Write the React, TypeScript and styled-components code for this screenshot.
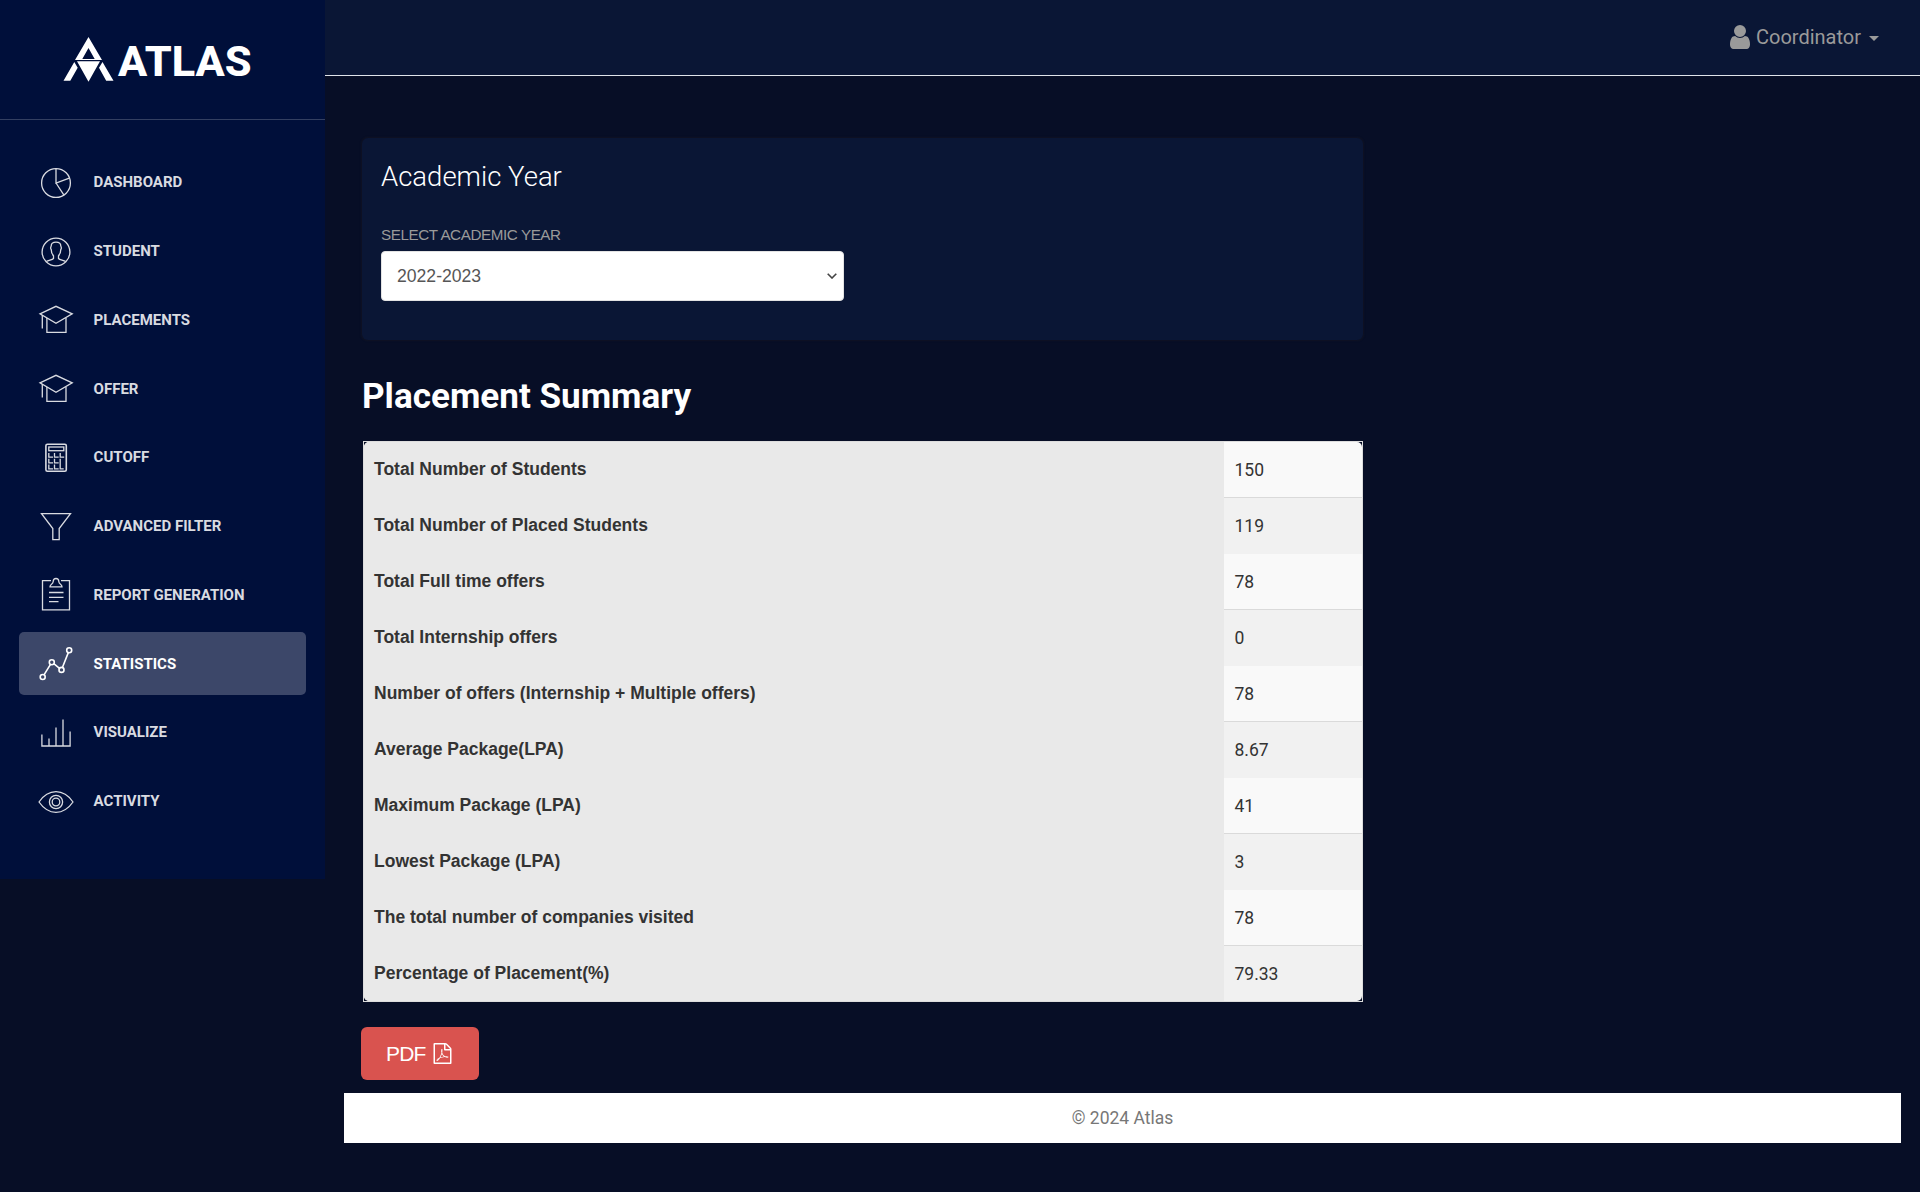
import React from "react";
import styled, { createGlobalStyle } from "styled-components";

const GlobalStyle = createGlobalStyle`
  * { box-sizing: border-box; }
  html, body { margin: 0; background: #070e26; }
  body { font-family: Roboto, "Liberation Sans", sans-serif; color: #333; }
`;

const Page = styled.div`
  display: flex;
  align-items: flex-start;
  height: 1192px;
  overflow: hidden;
`;

const Sidebar = styled.aside`
  width: 325px;
  height: 878.5px;
  flex: none;
  background: #000f3a;
`;

const Brand = styled.div`
  height: 120px;
  padding: 32px 0 0 58px;
  border-bottom: 1px solid #333f61;
  svg { display: block; }
`;

const Nav = styled.nav`
  display: flex;
  flex-direction: column;
  gap: 6px;
  padding: 30.875px 19px 0;
`;

const NavItem = styled.a<{ $active?: boolean }>`
  display: flex;
  align-items: center;
  gap: 19.6px;
  height: 62.75px;
  padding-left: 19px;
  border-radius: 5px;
  background: ${(p) => (p.$active ? "#3c4769" : "transparent")};
  color: ${(p) => (p.$active ? "#fff" : "#d9dbe1")};
  font-size: 15px;
  font-weight: 700;
  line-height: 20px;
  text-transform: uppercase;
  svg {
    flex: none;
    margin-top: 1px;
    fill: none;
    stroke: currentColor;
    stroke-width: 1.3;
  }
`;

const Main = styled.div`
  flex: 1;
  min-width: 0;
`;

const Header = styled.header`
  display: flex;
  justify-content: flex-end;
  align-items: center;
  height: 76px;
  padding: 0 41px 2px 0;
  background: #0a1635;
  border-bottom: 1px solid #dfe3ea;
`;

const UserMenu = styled.div`
  display: flex;
  align-items: center;
  color: #9a9a9a;
  font-size: 20px;
  line-height: 28px;
  svg { margin-right: 6px; }
`;

const Caret = styled.span`
  margin-left: 8px;
  margin-top: 3px;
  border: 5px solid transparent;
  border-top-color: currentColor;
  border-bottom: 0;
`;

const Content = styled.main`
  padding: 62px 0 0 37px;
  width: 1038px;
`;

const Card = styled.section`
  height: 202px;
  padding: 20px 19px 0;
  border-radius: 6px;
  background: #0a1635;
  box-shadow: 0 0 2px 1px rgba(35, 30, 30, 0.3);
`;

const CardTitle = styled.h4`
  margin: 0;
  color: #fff;
  font-size: 27.5px;
  font-weight: 300;
  line-height: 38px;
`;

const Label = styled.label`
  display: block;
  margin-top: 29px;
  color: #9a9a9a;
  font: 15.2px/20px "Liberation Sans", Arial, sans-serif;
  letter-spacing: -0.4px;
  text-transform: uppercase;
`;

const Select = styled.div`
  display: flex;
  align-items: center;
  justify-content: space-between;
  width: 463px;
  height: 50px;
  margin-top: 6px;
  padding: 0 6px 1px 15px;
  border: 1px solid #e3e3e3;
  border-radius: 4px;
  background: #fff;
  color: #565656;
  font: 17.6px/24px "Liberation Sans", Arial, sans-serif;
`;

const SectionTitle = styled.h2`
  margin: 33px 0 0;
  color: #fff;
  font-size: 35.1px;
  font-weight: 700;
  line-height: 46px;
`;

const Summary = styled.div`
  width: 1000px;
  height: 561px;
  margin: 22px 0 0 1px;
  border: 1px solid #ddd;
`;

const Rows = styled.div`
  height: 559px;
  border-radius: 5px;
  overflow: hidden;
`;

const Row = styled.div<{ $odd: boolean }>`
  display: grid;
  grid-template-columns: 860px 1fr;
  height: 56px;
  background: ${(p) => (p.$odd ? "#f9f9f9" : "#f1f1f1")};
`;

const RowLabel = styled.div`
  padding: 15px 0 0 10px;
  background: #e9e9e9;
  font: 700 17.5px/24px "Liberation Sans", Arial, sans-serif;
  color: #333;
`;

const RowValue = styled.div<{ $odd: boolean }>`
  padding: 15px 0 0 10.5px;
  border-bottom: ${(p) => (p.$odd ? "1px solid #dadada" : "0")};
  font-size: 17.5px;
  line-height: 27px;
`;

const PdfButton = styled.button`
  display: flex;
  align-items: center;
  gap: 6px;
  width: 118px;
  height: 53px;
  margin: 25px 0 0 -1px;
  padding: 0 0 0 25px;
  border: 0;
  border-radius: 6px;
  background: #d9534f;
  color: #fff;
  font: 21px/28px "Liberation Sans", Arial, sans-serif;
  letter-spacing: -0.8px;
`;

const Footer = styled.footer`
  height: 50px;
  margin: 13px 19px 0;
  background: #fff;
  color: #777;
  font-size: 17.5px;
  line-height: 50px;
  text-align: center;
`;

const Cap = () => (
  <>
    <path d="M2 11.900 18 4.300l16.200 7.600L18 21.200z" />
    <path d="M8.900 16v14.400H28V16M4.300 13v13.400" />
  </>
);

const icons: Record<string, React.ReactNode> = {
  Dashboard: (
    <>
      <circle cx="18" cy="18" r="14.4" />
      <path d="M18 3.6V18l13.3-4.8M18 18l7.8 11.8" />
    </>
  ),
  Student: (
    <>
      <circle cx="18" cy="18" r="13.9" />
      <path d="M8.3 27.5c2.2-1.5 5.8-1.5 7.2-3V21.700c-2-2-2.300-3.600-2.300-6.200-1-1.300-.5-2.500 0-3.500 0-2.600 1.800-3.900 4.800-3.900s4.800 1.300 4.800 3.900c.5 1 1 2.200 0 3.500 0 2.600-.3 4.200-2.300 6.200v2.800c1.400 1.500 5 1.500 7.200 3" />
    </>
  ),
  Placements: <Cap />,
  Offer: <Cap />,
  Cutoff: (
    <>
      <rect x="7.900" y="4.300" width="20.400" height="27" rx="1.500" strokeWidth="1.600" />
      <rect x="10.800" y="7" width="15" height="3.700" />
      <path d="M10.800 13v4.200h4.200M16.500 13v4.200h4.200M22.200 13v4.200h4M10.800 18.700v4.200h4.200M16.500 18.700v4.200h4.200M10.800 24.500v4.300h4.200M16.500 24.500v4.300h4.200M22.200 18.700v10.100h3.500" />
    </>
  ),
  "Advanced Filter": <path d="M3.500 4.700h29L21.200 19.500v11.200h-6.400V19.500z" />,
  "Report Generation": (
    <>
      <path d="M13 3.700H4.500v29.200h27V3.700H23" />
      <path d="M12 9.800c0-3 3-2 3.200-5.300.1-4 5.500-4 5.600 0C21 7.800 24 6.800 24 9.800zM11 15.500h14.500M11 20.300h14.500M11 24.700h9.500" />
    </>
  ),
  Statistics: (
    <g strokeWidth="1.600">
      <circle cx="4.700" cy="31" r="2.500" />
      <circle cx="13.800" cy="16.200" r="2.500" />
      <circle cx="23.500" cy="23.900" r="2.500" />
      <circle cx="31.200" cy="4.200" r="2.500" />
      <path d="M6 28.800l6.500-10.400M15.800 17.700l5.700 4.600M24.400 21.500l5.900-14.900" />
    </g>
  ),
  Visualize: <path d="M3.900 19.600v11.400h28.200V16.600M11 31v-7.500M18 31V12.600M25 31V4.600" />,
  Activity: (
    <>
      <path d="M1 18C5.500 11.500 11 7.700 18 7.700S30.500 11.500 35 18C30.500 24.500 25 28.300 18 28.300S5.500 24.500 1 18z" />
      <circle cx="18" cy="18" r="6.600" />
      <circle cx="18" cy="18" r="3.800" />
    </>
  ),
};

const summary: [string, string][] = [
  ["Total Number of Students", "150"],
  ["Total Number of Placed Students", "119"],
  ["Total Full time offers", "78"],
  ["Total Internship offers", "0"],
  ["Number of offers (Internship + Multiple offers)", "78"],
  ["Average Package(LPA)", "8.67"],
  ["Maximum Package (LPA)", "41"],
  ["Lowest Package (LPA)", "3"],
  ["The total number of companies visited", "78"],
  ["Percentage of Placement(%)", "79.33"],
];

export default function App() {
  return (
    <>
      <GlobalStyle />
      <Page>
        <Sidebar>
          <Brand>
            <svg width="200" height="56" viewBox="58 32 200 56" fill="#fff">
              <path
                fillRule="evenodd"
                d="M88.500 37 102 60H75zM88.500 48 82.300 59h12.400z"
              />
              <path d="M77 61.300h23L88.500 81.800zM74.300 62l3.400 5.800-7.400 13H63.500zM102.500 62 113.500 80.800h-7.300l-7.200-13z" />
              <text
                x="118"
                y="76.300"
                fontFamily="Roboto"
                fontWeight="800"
                fontSize="43"
                textLength="133.500"
                lengthAdjust="spacingAndGlyphs"
              >
                ATLAS
              </text>
            </svg>
          </Brand>
          <Nav>
            {Object.keys(icons).map((name) => (
              <NavItem key={name} $active={name === "Statistics"}>
                <svg width="36" height="36" viewBox="0 0 36 36">
                  {icons[name]}
                </svg>
                {name}
              </NavItem>
            ))}
          </Nav>
        </Sidebar>
        <Main>
          <Header>
            <UserMenu>
              <svg width="20" height="28" viewBox="0 0 1280 1792" fill="currentColor">
                <path d="M1280 1399q0 109-62.500 187t-150.500 78h-854q-88 0-150.500-78t-62.500-187q0-85 8.500-160.500t31.500-152 58.500-131 94-89 134.500-34.500q131 128 313 128t313-128q76 0 134.500 34.500t94 89 58.500 131 31.500 152 8.500 160.500zm-256-887q0 159-112.500 271.500t-271.500 112.500-271.500-112.500-112.500-271.500 112.500-271.500 271.500-112.500 271.500 112.500 112.500 271.500z" />
              </svg>
              Coordinator
              <Caret />
            </UserMenu>
          </Header>
          <Content>
            <Card>
              <CardTitle>Academic Year</CardTitle>
              <Label>Select Academic Year</Label>
              <Select>
                2022-2023
                <svg width="10" height="6" viewBox="0 0 10 6" fill="none" stroke="#444" strokeWidth="1.600">
                  <path d="M.7.700 5 5 9.300.700" />
                </svg>
              </Select>
            </Card>
            <SectionTitle>Placement Summary</SectionTitle>
            <Summary>
              <Rows>
                {summary.map(([label, value], i) => (
                  <Row key={label} $odd={i % 2 === 0}>
                    <RowLabel>{label}</RowLabel>
                    <RowValue $odd={i % 2 === 0}>{value}</RowValue>
                  </Row>
                ))}
              </Rows>
            </Summary>
            <PdfButton>
              PDF
              <svg width="21" height="21" viewBox="0 0 1792 1792" fill="currentColor">
                <path d="M1596 380q28 28 48 76t20 88v1152q0 40-28 68t-68 28h-1344q-40 0-68-28t-28-68v-1600q0-40 28-68t68-28h896q40 0 88 20t76 48zm-444-244v376h376q-10-29-22-41l-313-313q-12-12-41-22zm384 1528v-1024h-416q-40 0-68-28t-28-68v-416h-768v1536h1280zm-514-593q33 26 84 56 59-7 117-7 147 0 177 49 16 22 2 52 0 1-1 2l-2 2v1q-6 38-71 38-48 0-115-20t-130-53q-221 24-392 83-153 262-242 262-15 0-28-7l-24-12q-1-1-6-5-10-10-6-36 9-40 56-91.500t132-96.500q14-9 23 6 2 2 2 4 52-85 107-197 68-136 104-262-24-82-30.500-159.500t6.500-127.500q11-40 42-40h22q23 0 35 15 18 21 9 68-2 6-4 8 1 3 1 8v30q-2 123-14 192 55 164 146 238zm-576 411q52-24 137-158-51 40-87.500 84t-49.500 74zm398-920q-15 42-2 132 1-7 7-44 0-3 7-43 1-4 4-8-1-1-1-2t-1-2-1-2q-1-22-13-36 0 1-1 2v2zm-124 661q135-54 284-81-2-1-13-9.500t-16-13.500q-76-67-127-176-27 86-83 197-30 56-45 83zm646-16q-24-24-140-24 76 28 124 28 14 0 18-1 0-1-2-3z" />
              </svg>
            </PdfButton>
          </Content>
          <Footer>© 2024 Atlas</Footer>
        </Main>
      </Page>
    </>
  );
}
